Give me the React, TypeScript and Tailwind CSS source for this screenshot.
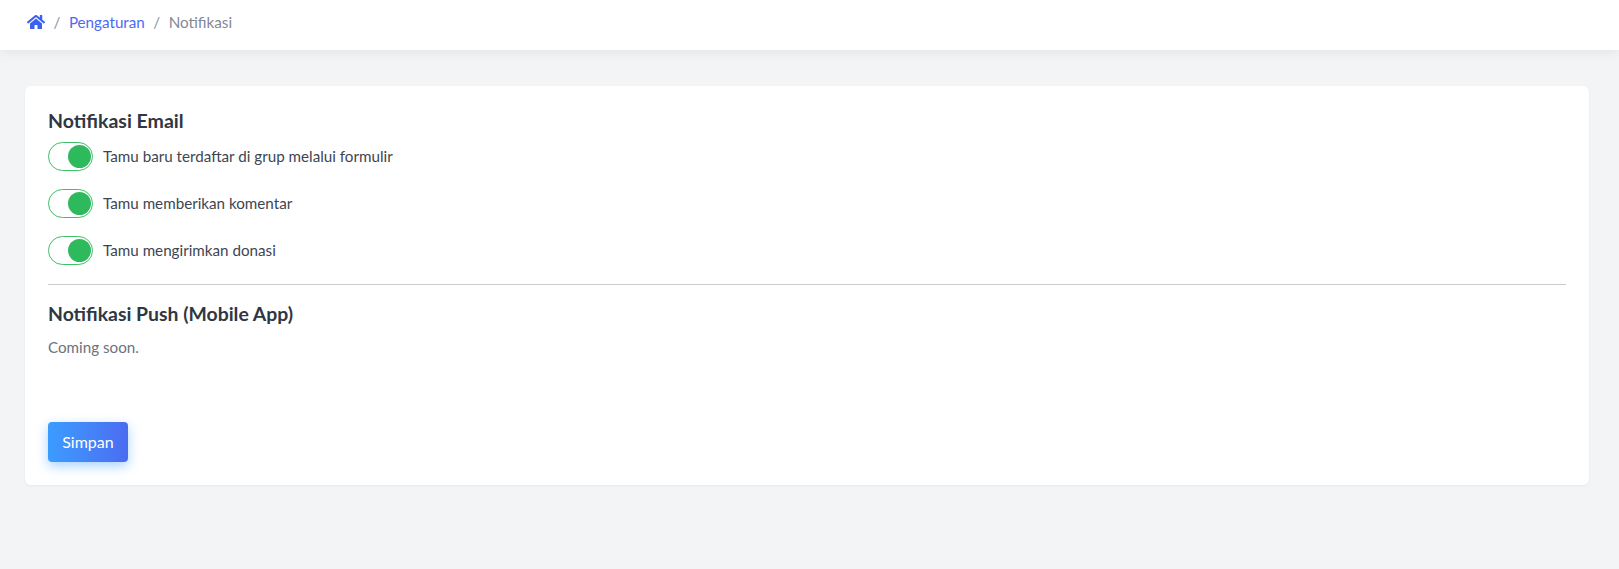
import { FaHome } from "react-icons/fa";

function Row({ label, className }: { label: string; className: string }) {
  return (
    <div className={`flex items-center ${className}`}>
      <div className="flex h-[29px] w-[45px] items-center justify-end rounded-full border-[1.5px] border-[#3cc068] bg-white pr-[1.5px]">
        <div className="h-[23px] w-[23px] rounded-full bg-[#2fb95d]" />
      </div>
      <span className="ml-[10px] pb-[2px] text-[15.2px] leading-[22px] text-[#3d4552]">{label}</span>
    </div>
  );
}

export default function App() {
  return (
    <div className="flex min-h-[569px] flex-col bg-[#f3f4f6] font-['Lato','Liberation_Sans',sans-serif]">
      <header className="flex h-[50px] items-center gap-[8.5px] bg-white pb-[6px] pl-[27px] text-[15.2px] shadow-[0_2px_12px_rgba(0,0,0,0.07)]">
        <FaHome className="-mt-[1px] h-[18px] w-[18px] text-[#3b5ff0]" />
        <span className="text-[#8b93a3]">/</span>
        <span className="text-[#4a6cf0]">Pengaturan</span>
        <span className="text-[#8b93a3]">/</span>
        <span className="text-[#7f8898]">Notifikasi</span>
      </header>
      <main className="px-[25px] pt-[36px] pr-[30px]">
        <section className="h-[399px] rounded-[6px] bg-white px-[23px] pt-[22px] shadow-[0_1px_3px_rgba(0,0,0,0.05)]">
          <h2 className="text-[19.5px] leading-[26px] font-bold text-[#2f3742]">Notifikasi Email</h2>
          <Row className="mt-[8px]" label="Tamu baru terdaftar di grup melalui formulir" />
          <Row className="mt-[18px]" label="Tamu memberikan komentar" />
          <Row className="mt-[18px]" label="Tamu mengirimkan donasi" />
          <div className="mt-[19px] h-px bg-[#c9cbce]" />
          <h2 className="mt-[16px] text-[19.4px] leading-[26px] font-bold text-[#2f3742]">Notifikasi Push (Mobile App)</h2>
          <p className="mt-[9px] text-[15.2px] leading-[22px] text-[#6b7280]">Coming soon.</p>
          <button className="mt-[64px] flex h-[40px] w-[80px] items-center justify-center rounded-[4px] bg-gradient-to-r from-[#3b9cff] to-[#4a6cf0] text-[16px] font-normal text-white shadow-[0_4px_12px_rgba(59,156,255,0.45)]">
            Simpan
          </button>
        </section>
      </main>
    </div>
  );
}
